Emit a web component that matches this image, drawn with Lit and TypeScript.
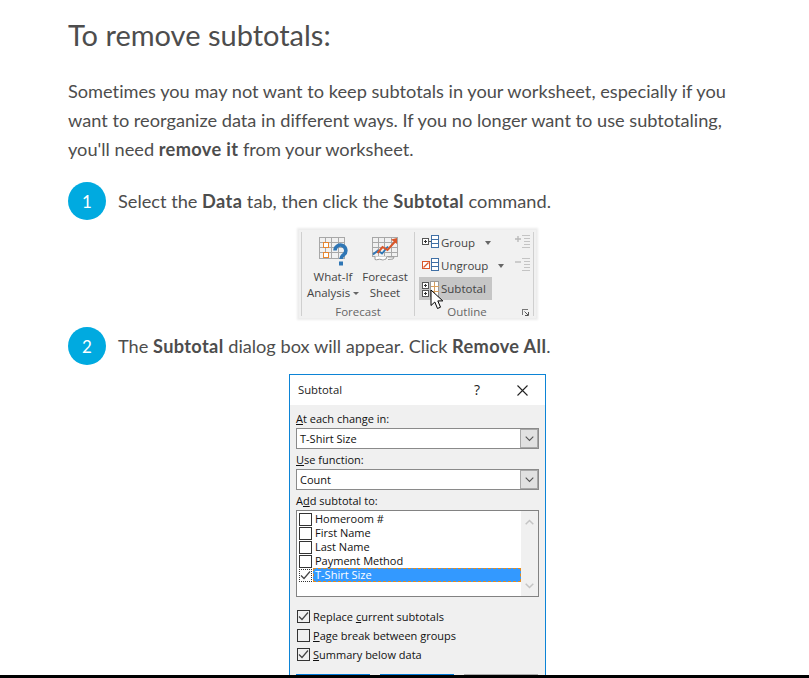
import { LitElement, html, css, svg } from "lit";
import { customElement } from "lit/decorators.js";

const whatIf = html`<svg width="30" height="30" viewBox="0 0 30 30">
  <g fill="none" stroke="#a8a8a8" stroke-width="1" shape-rendering="crispEdges">
    <path d="M1.5 1.5h25v21h-25z"/>
    <path d="M1.5 6.5h25M1.5 11.5h25M1.5 16.5h25M7.5 1.5v21M13.5 1.5v21M20.5 1.5v21"/>
  </g>
  <g fill="#fff" stroke="#e8862e" stroke-width="1" shape-rendering="crispEdges">
    <rect x="5.5" y="6.5" width="5" height="5"/>
    <rect x="5.5" y="16.5" width="5" height="5"/>
  </g>
  <path d="M17 14.500a5.400 5.400 0 1 1 8.800 4.200c-1.800 1.400-2.800 2-2.800 4.300" fill="none" stroke="#2f76b5" stroke-width="3.600"/>
  <rect x="21" y="25.500" width="4" height="4" fill="#2f76b5"/>
</svg>`;

const forecast = html`<svg width="28" height="26" viewBox="0 0 28 26">
  <g fill="none" stroke="#a8a8a8" stroke-width="1" shape-rendering="crispEdges">
    <path d="M1.5 1.5h25v19h-25z"/>
    <path d="M1.5 6.5h25M1.5 11.5h25M1.5 16.5h25M7.5 1.5v19M13.5 1.5v19M20.5 1.5v19"/>
  </g>
  <path d="M4 20.500v3c2 1 4-1 6 0s3 0 5-.5l1-2.500M17 21h6l-1 2-5 .5" fill="#fff" stroke="#9a9a9a" stroke-width="1"/>
  <path d="M2 18.500l5-4 4 3 6-7" fill="none" stroke="#2f76b5" stroke-width="1.800"/>
  <path d="M6.500 17l5-6 5 3 8-9" fill="none" stroke="#d9572b" stroke-width="2"/>
  <path d="M20 3.500l6-1.500v6z" fill="#d9572b"/>
</svg>`;

const listBox = svg`<g fill="#fff" stroke="#3f6fa5" stroke-width="1" shape-rendering="crispEdges">
  <rect x="9.5" y="0.500" width="7" height="4"/><rect x="9.5" y="4.500" width="7" height="4"/><rect x="9.5" y="8.500" width="7" height="4"/>
</g>`;

const groupIcon = html`<svg class="ico" width="17" height="15" viewBox="0 0 17 15">
  <rect x="0.500" y="3.500" width="6" height="6" fill="#fff" stroke="#555" shape-rendering="crispEdges"/>
  <path d="M2 6.500h3M3.500 5v3" stroke="#333" shape-rendering="crispEdges"/>
  <path d="M7 6.500h2" stroke="#555" shape-rendering="crispEdges"/>${listBox}
</svg>`;

const ungroupIcon = html`<svg class="ico" width="17" height="15" viewBox="0 0 17 15">
  <rect x="0.500" y="3.500" width="7" height="7" fill="#fff" stroke="#d9572b" shape-rendering="crispEdges"/>
  <path d="M1.500 9.500l5-5" stroke="#d9572b" stroke-width="1.300"/>
  ${listBox}
</svg>`;

const subtotalIcon = html`<svg class="ico" width="17" height="16" viewBox="0 0 17 16">
  <g fill="#fff" stroke="#555" shape-rendering="crispEdges">
    <rect x="0.500" y="1.500" width="6" height="6"/><rect x="0.500" y="9.500" width="6" height="6"/>
    <path d="M2 4.500h3M3.500 3v3M2 12.500h3M3.500 11v3" stroke="#333"/>
  </g>
  <g fill="#fff" stroke="#9a9a9a" shape-rendering="crispEdges">
    <rect x="8.500" y="0.500" width="8" height="15"/>
    <path d="M8.500 5.500h8M8.500 10.500h8M12.500 .5v15" stroke="#d8a060"/>
  </g>
</svg>`;

const addLevel = html`<svg width="16" height="15" viewBox="0 0 16 15">
  <path d="M0 5h6M3 2v6" stroke="#b8b8b8" stroke-width="1.300"/>
  <path d="M7 1.500h8M9 4.500h6M9 7.500h6M9 10.500h6M7 13.500h8" stroke="#c4c4c4" shape-rendering="crispEdges"/>
</svg>`;
const removeLevel = html`<svg width="16" height="15" viewBox="0 0 16 15">
  <path d="M0 5h6" stroke="#b8b8b8" stroke-width="1.300"/>
  <path d="M7 1.500h8M9 4.500h6M9 7.500h6M9 10.500h6M7 13.500h8" stroke="#c4c4c4" shape-rendering="crispEdges"/>
</svg>`;

const launcher = html`<svg class="launch" width="7" height="7" viewBox="0 0 7 7">
  <path d="M.5 6V.5H6" fill="none" stroke="#777" shape-rendering="crispEdges"/>
  <path d="M2.500 2.500L6 6M6.500 3v3.500H3" fill="none" stroke="#555"/>
</svg>`;

const cursor = html`<svg class="cursor" width="15" height="21" viewBox="0 0 15 21">
  <path d="M1 1v15.500l3.800-3.500 2.700 6.500 3-1.300-2.700-6.300h5z" fill="#fff" stroke="#000" stroke-width="1"/>
</svg>`;

const chevron = html`<svg width="9" height="6" viewBox="0 0 9 6"><path d="M.7 .7L4.500 4.500 8.300 .7" fill="none" stroke="#555" stroke-width="1.100"/></svg>`;
const scrollUp = html`<svg width="9" height="6" viewBox="0 0 9 6"><path d="M.7 5.300L4.500 1.500 8.300 5.300" fill="none" stroke="#c4c4c4" stroke-width="1.500"/></svg>`;
const scrollDown = html`<svg width="9" height="6" viewBox="0 0 9 6"><path d="M.7 .7L4.500 4.500 8.300 .7" fill="none" stroke="#c4c4c4" stroke-width="1.500"/></svg>`;
const tick = html`<svg width="11" height="11" viewBox="0 0 11 11"><path d="M1 5.500l3 3L10 1.500" fill="none" stroke="#444" stroke-width="1.200"/></svg>`;

@customElement("app-root")
export class AppRoot extends LitElement {
  static styles = css`
    :host { display: block; height: 678px; overflow: hidden; position: relative; background: #fff; font-family: "Lato", "Open Sans", sans-serif; color: #4d4d4d; font-variant-ligatures: none; }
    .page { padding: 0 42px 0 68px; width: 699px; }
    h2 { margin: 0; padding-top: 17px; font-size: 29px; line-height: 36px; font-weight: 400; }
    p { margin: 24px 0 0; font-size: 18.200px; line-height: 28.800px; height: 87px; max-width: 680px; }
    b { letter-spacing: .35px; }
    .step { display: flex; align-items: center; gap: 12px; font-size: 18.200px; height: 38px; }
    .s1 { margin-top: 18px; }
    .s2 { margin-top: 9px; }
    .num { width: 38px; height: 38px; border-radius: 50%; background: #00aae0; color: #fff; display: flex; align-items: center; justify-content: center; font-size: 17px; font-weight: 400; flex: none; }

    .ribbon { position: relative; margin: 10px auto 0; width: 237px; height: 88px; box-sizing: border-box; padding: 2px 2px 0; background: #f1f1f1; box-shadow: 0 0 2px 2px #ececec; display: flex; font: 11.500px/16px "Open Sans", sans-serif; color: #444; white-space: nowrap; }
    .grp { height: 84px; box-sizing: border-box; border-left: 1px solid #cfcfcf; display: flex; flex-direction: column; }
    .forecast-grp { width: 113px; flex: none; }
    .outline-grp { width: 120px; flex: none; border-right: 1px solid #cfcfcf; position: relative; }
    .tools { flex: 1; display: flex; padding: 4px 0 0 5px; gap: 3px; }
    .tool { display: flex; flex-direction: column; align-items: center; text-align: center; width: 52px; flex: none; }
    .tool.fc { width: 46px; }
    .tool .pic { height: 33px; display: flex; align-items: flex-start; justify-content: center; }
    .tri { display: inline-block; width: 0; height: 0; border: 3px solid transparent; border-top: 3px solid #666; border-bottom: 0; vertical-align: middle; margin-left: 3px; }
    .glabel { height: 16px; margin-bottom: -4px; text-align: center; color: #666; }
    .outline-body { flex: 1; display: flex; margin-top: -1px; }
    .rows { padding-left: 4px; width: 96px; flex: none; }
    .row { height: 23px; display: flex; align-items: center; padding-left: 3px; }
    .row .ico { margin-right: 2px; flex: none; }
    .row .tri { margin-left: 10px; border-width: 4px 3px 0; }
    .row.on { background: #c6c6c6; width: 70px; }
    .levels { display: flex; flex-direction: column; gap: 8px; padding-top: 3px; }
    .outline-grp .glabel { padding-right: 14px; }
    .launch { position: absolute; right: 4px; bottom: 0; }
    .cursor { position: absolute; left: 15px; top: 57px; }

    .dialog { margin: 9px auto 0; width: 257px; height: 305px; box-sizing: border-box; border: 1px solid #0c84d6; background: #f0f0f0; font: 11px/16px "Open Sans", sans-serif; color: #111; overflow: hidden; }
    .title { height: 30px; background: #fff; display: flex; align-items: center; padding: 0 0 0 8px; font-size: 11.300px; color: #222; }
    .title .t { flex: 1; }
    .title .q { width: 20px; font-size: 14px; margin-right: 30px; text-align: center; }
    .title svg { margin-right: 17px; }
    .body { padding: 6px 6px 0; }
    .lab { height: 16px; }
    .combo { height: 21px; box-sizing: border-box; border: 1px solid #8a8a8a; background: #fff; display: flex; align-items: center; padding-left: 3px; margin: 1px 0 3px; }
    .combo .txt { flex: 1; }
    .combo .btn { width: 16px; height: 17px; margin-right: 0; background: #e1e1e1; border: 1px solid #a8a8a8; display: flex; align-items: center; justify-content: center; }
    .list { height: 87px; margin-top: 1px; box-sizing: border-box; border: 1px solid #828282; background: #fff; display: flex; padding-top: 1px; }
    .items { flex: 1; padding-left: 2px; }
    .item { height: 14px; display: flex; align-items: center; line-height: 14px; }
    .box { width: 13px; height: 13px; box-sizing: border-box; border: 1px solid #333; background: #fff; display: flex; align-items: center; justify-content: center; flex: none; }
    .item .name { padding-left: 2px; margin-left: 1px; flex: 1; }
    .item.sel .name { background: #3399ff; color: #fff; height: 14px; outline: 1px dashed #e08a20; outline-offset: -1px; }
    .item.sel .box { border-style: dotted; }
    .sb { width: 17px; margin-top: -1px; background: #f0f0f0; display: flex; flex-direction: column; justify-content: space-between; align-items: center; padding: 8px 0 7px; box-sizing: border-box; }
    .checks { margin-top: 10px; }
    .chk { height: 19px; display: flex; align-items: center; gap: 3px; padding-left: 1px; }
    .chk .box { background: transparent; }
    .btns { display: flex; gap: 10px; margin-top: 10px; }
    .b { width: 74px; height: 23px; box-sizing: border-box; border-top: 1px solid #0078d7; }
    .b.gray { border-color: #adadad; }
    u { text-underline-offset: 1px; }

    .bottom { position: absolute; left: 0; right: 0; bottom: 0; height: 3px; background: #000; }
  `;
  render() {
    return html`<div class="page">
      <h2>To remove subtotals:</h2>
      <p>Sometimes you may not want to keep subtotals in your worksheet, especially if you want to reorganize data in different ways. If you no longer want to use subtotaling, you'll need <b>remove it</b> from your worksheet.</p>
      <div class="step s1"><span class="num">1</span><span>Select the <b>Data</b> tab, then click the <b>Subtotal</b> command.</span></div>
      <div class="ribbon">
        <div class="grp forecast-grp">
          <div class="tools">
            <div class="tool"><div class="pic">${whatIf}</div><span>What-If</span><span>Analysis<i class="tri"></i></span></div>
            <div class="tool fc"><div class="pic">${forecast}</div><span>Forecast</span><span>Sheet</span></div>
          </div>
          <div class="glabel">Forecast</div>
        </div>
        <div class="grp outline-grp">
          <div class="outline-body">
            <div class="rows">
              <div class="row">${groupIcon}<span>Group</span><i class="tri"></i></div>
              <div class="row">${ungroupIcon}<span>Ungroup</span><i class="tri"></i></div>
              <div class="row on">${subtotalIcon}<span>Subtotal</span></div>
            </div>
            <div class="levels">${addLevel}${removeLevel}</div>
          </div>
          <div class="glabel">Outline</div>
          ${launcher}${cursor}
        </div>
      </div>
      <div class="step s2"><span class="num">2</span><span>The <b>Subtotal</b> dialog box will appear. Click <b>Remove All</b>.</span></div>
      <div class="dialog">
        <div class="title"><span class="t">Subtotal</span><span class="q">?</span>
          <svg width="11" height="11" viewBox="0 0 11 11"><path d="M.5 .5l10 10M10.500 .5l-10 10" stroke="#222" stroke-width="1.100"/></svg>
        </div>
        <div class="body">
          <div class="lab"><u>A</u>t each change in:</div>
          <div class="combo"><span class="txt">T-Shirt Size</span><span class="btn">${chevron}</span></div>
          <div class="lab"><u>U</u>se function:</div>
          <div class="combo"><span class="txt">Count</span><span class="btn">${chevron}</span></div>
          <div class="lab">A<u>d</u>d subtotal to:</div>
          <div class="list">
            <div class="items">
              <div class="item"><span class="box"></span><span class="name">Homeroom #</span></div>
              <div class="item"><span class="box"></span><span class="name">First Name</span></div>
              <div class="item"><span class="box"></span><span class="name">Last Name</span></div>
              <div class="item"><span class="box"></span><span class="name">Payment Method</span></div>
              <div class="item sel"><span class="box">${tick}</span><span class="name">T-Shirt Size</span></div>
            </div>
            <div class="sb">${scrollUp}${scrollDown}</div>
          </div>
          <div class="checks">
            <div class="chk"><span class="box">${tick}</span><span>Replace <u>c</u>urrent subtotals</span></div>
            <div class="chk"><span class="box"></span><span><u>P</u>age break between groups</span></div>
            <div class="chk"><span class="box">${tick}</span><span><u>S</u>ummary below data</span></div>
          </div>
          <div class="btns"><span class="b"></span><span class="b"></span><span class="b gray"></span></div>
        </div>
      </div>
    </div><div class="bottom"></div>`;
  }
}
